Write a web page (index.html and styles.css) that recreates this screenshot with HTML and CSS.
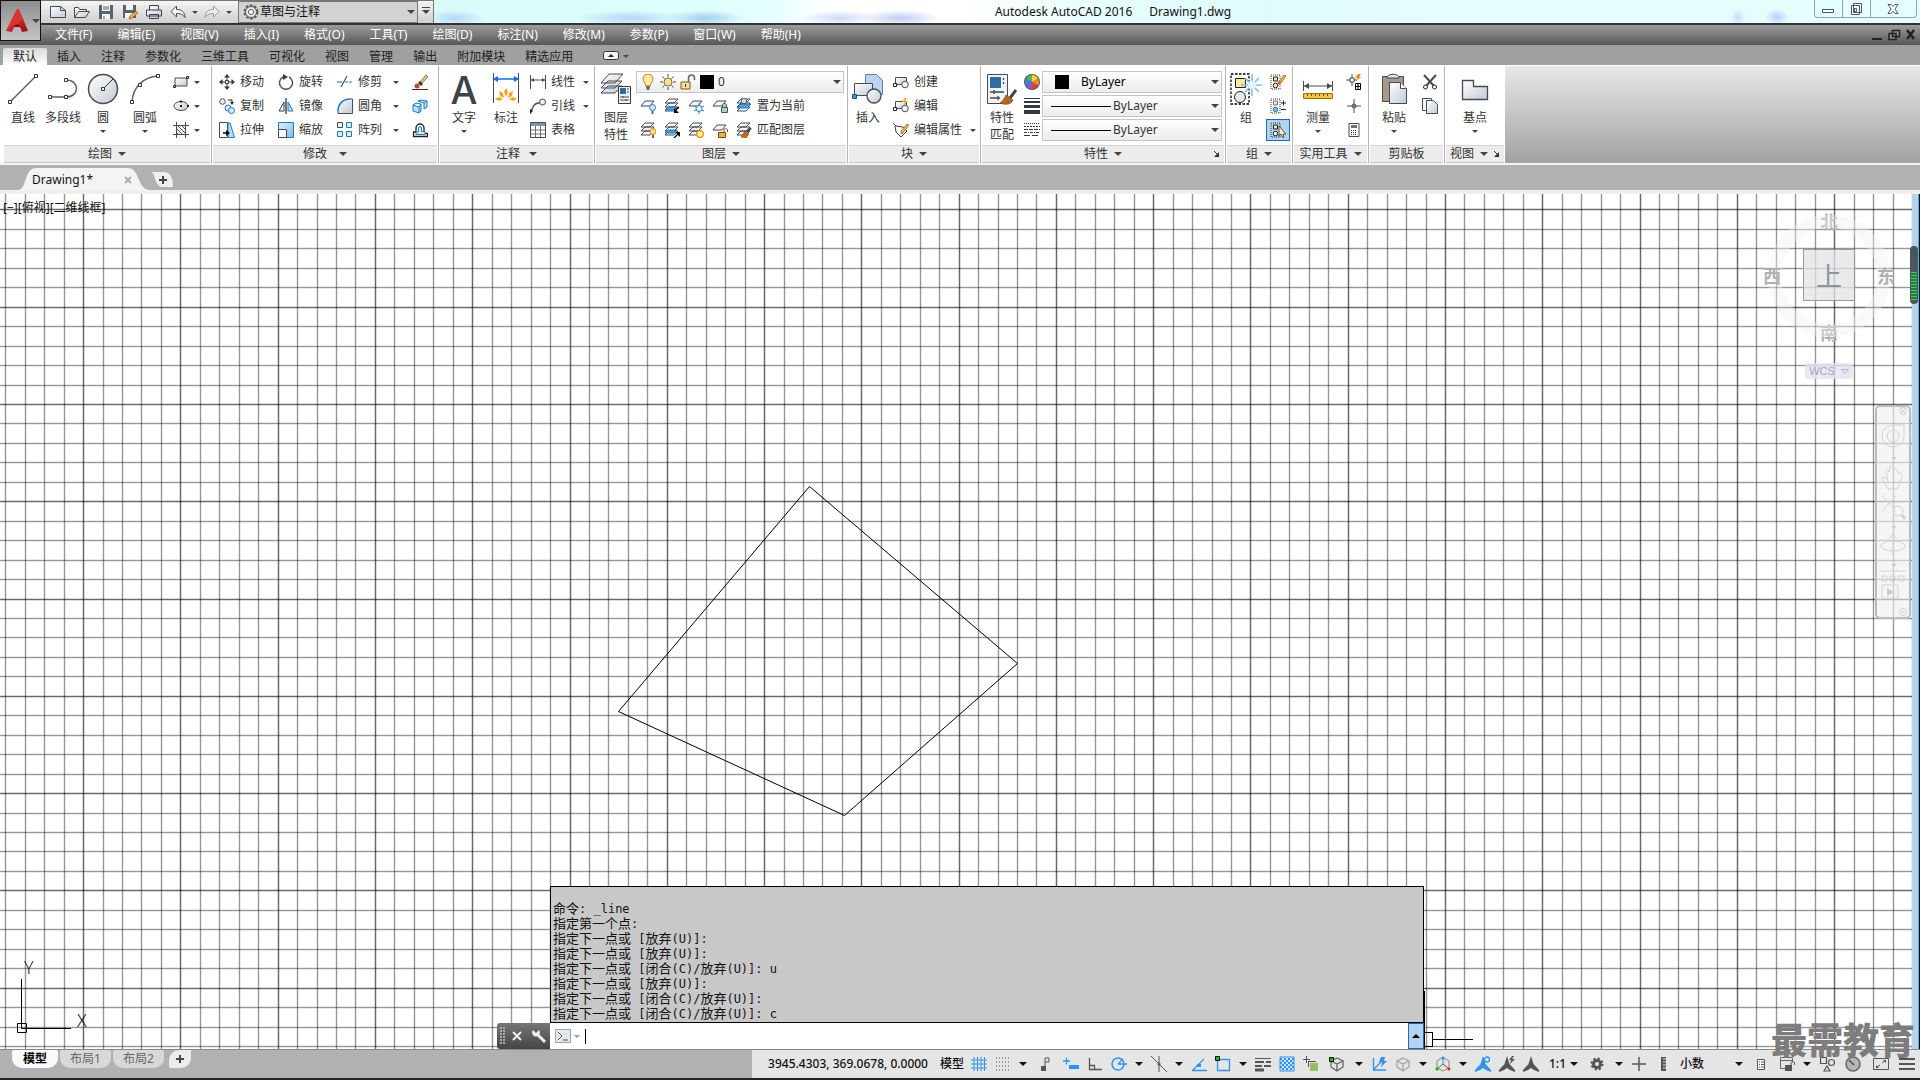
FILE: index.html
```html
<!DOCTYPE html>
<html lang="zh-CN">
<head>
    <meta charset="UTF-8">
    <meta name="viewport" content="width=device-width, initial-scale=1.0">
    <title>Autodesk AutoCAD 2016 - Drawing1.dwg</title>
    <link rel="stylesheet" href="styles.css">
</head>
<body>
    <!-- Icon sprite -->
    <svg class="sprite" aria-hidden="true">
        <defs>
            <linearGradient id="metal" x1="0" y1="0" x2="1" y2="1">
                <stop offset="0" stop-color="#ffffff"/><stop offset="1" stop-color="#c3cad3"/>
            </linearGradient>
            <linearGradient id="red" x1="0" y1="0" x2="1" y2="1">
                <stop offset="0" stop-color="#f0564c"/><stop offset="1" stop-color="#9c0c10"/>
            </linearGradient>
            <linearGradient id="sky" x1="0" y1="0" x2="1" y2="1">
                <stop offset="0" stop-color="#e2f1fb"/><stop offset="1" stop-color="#7fbbe0"/>
            </linearGradient>
        </defs>

        <!-- quick access -->
        <symbol id="i-logo" viewBox="0 0 24 26">
            <path d="M12 1 1 23l6 1 2-5h6l2 5 6-1L14 1z" fill="url(#red)"/>
            <path d="M12 1 1 23l8-4 9-8z" fill="#d9342e"/>
            <path d="m1 23 8-4h6l8 4-11-7z" fill="#8d0a0f"/>
        </symbol>
        <symbol id="i-new" viewBox="0 0 16 16"><path d="M.5 2.500h10l5 4v7H.5zM10.500 2.500v4h5" fill="url(#metal)" stroke="#444b54"/></symbol>
        <symbol id="i-open" viewBox="0 0 16 16"><path d="M.5 13.500v-10h4l1 2h7v2.500M.5 13.500l4-6h11l-4 6z" fill="url(#metal)" stroke="#444b54"/></symbol>
        <symbol id="i-save" viewBox="0 0 16 16"><path d="M1 1h14v14H1z" fill="#59616c"/><path d="M4 1h8v6H4zM4 10h8v5H4z" fill="#f4f5f6"/><path d="M5 3h6M5 5h6M6 12v3" stroke="#59616c"/></symbol>
        <symbol id="i-saveas" viewBox="0 0 16 16"><path d="M1 1h13v13H1z" fill="#59616c"/><path d="M4 1h7v5H4zM3 9h8v5H3z" fill="#f4f5f6"/><path d="m7 15 1-3 6-5 2 2-6 5z" fill="#f3b23c" stroke="#7b4b12" stroke-width=".6"/></symbol>
        <symbol id="i-print" viewBox="0 0 16 16"><path d="M3.500 6V1.500h9V6M.5 6h15v6H.5zM3.500 10.500h9v4h-9z" fill="url(#metal)" stroke="#3d434b"/></symbol>
        <symbol id="i-undo" viewBox="0 0 16 16"><path d="M6.500 2v3.500c5 0 8 2 8.500 8-2-3-4-4-8.500-4V13L1 7.500z" fill="#f4f6f8" stroke="#444b54"/></symbol>
        <symbol id="i-redo" viewBox="0 0 16 16"><path d="M9.500 2v3.500c-5 0-8 2-8.500 8 2-3 4-4 8.500-4V13L15 7.500z" fill="#eee" stroke="#999"/></symbol>
        <symbol id="i-gear" viewBox="0 0 16 16"><circle cx="8" cy="8" r="6.500" fill="none" stroke="#555" stroke-width="2" stroke-dasharray="2.600 1.500"/><circle cx="8" cy="8" r="5.500" fill="#e6e8ea" stroke="#555"/><circle cx="8" cy="8" r="2.500" fill="#fff" stroke="#555"/></symbol>

        <!-- draw -->
        <symbol id="b-line" viewBox="0 0 32 32"><path d="M3 29 29 3" stroke="#5a6068" stroke-width="1.500"/><path d="M1.500 27.500h3v3h-3zM27.500 1.500h3v3h-3z" fill="#fff" stroke="#333"/></symbol>
        <symbol id="b-pline" viewBox="0 0 32 32"><path d="M3 24h16c14 0 14-17 0-17" fill="none" stroke="#5a6068" stroke-width="1.500"/><path d="M1.500 22.500h3v3h-3zM17.500 22.500h3v3h-3zM17.500 5.500h3v3h-3z" fill="#fff" stroke="#333"/></symbol>
        <symbol id="b-circle" viewBox="0 0 32 32"><circle cx="16" cy="16" r="14.500" fill="url(#metal)" stroke="#444b54" stroke-width="1.500"/><path d="M16 16 26 6" stroke="#333"/><path d="M14.500 14.500h3v3h-3z" fill="#fff" stroke="#333"/></symbol>
        <symbol id="b-arc" viewBox="0 0 32 32"><path d="M3 29C4 14 14 4 29 3" fill="none" stroke="#5a6068" stroke-width="1.500"/><path d="M1.500 27.500h3v3h-3zM27.500 1.500h3v3h-3zM9.500 10.500h3v3h-3z" fill="#fff" stroke="#333"/></symbol>
        <symbol id="s-rect" viewBox="0 0 16 16"><path d="M2 4h12v8H2z" fill="url(#metal)" stroke="#444b54"/><path d="M.5 11.500h2v2h-2zM13.500 2.500h2v2h-2z" fill="#fff" stroke="#222"/></symbol>
        <symbol id="s-ellipse" viewBox="0 0 16 16"><ellipse cx="8" cy="8" rx="7" ry="4.500" fill="url(#metal)" stroke="#444b54"/><path d="M7 7h2v2H7zM7 2.500h2v2H7zM14 7h2v2h-2z" fill="#222"/></symbol>
        <symbol id="s-hatch" viewBox="0 0 16 16"><path d="M3 3h10v10H3z" fill="#f0f1f2"/><path d="m3 10 3 3M3 6l7 7M4 3l9 9M8 3l5 5" stroke="#555"/><path d="M0 3.500h16M0 12.500h16M3.500 0v16M12.500 0v16" stroke="#444b54"/></symbol>

        <!-- modify -->
        <symbol id="s-move" viewBox="0 0 16 16"><path d="M8 0l3 3.500H5zM8 16l3-3.500H5zM0 8l3.500-3v6zM16 8l-3.500-3v6z" fill="#333a42"/><path d="M6.500 6.500h3v3h-3z" fill="#fff" stroke="#333"/><path d="M8 3v3M8 10v3M3 8h3M10 8h3" stroke="#333"/></symbol>
        <symbol id="s-rotate" viewBox="0 0 16 16"><path d="M5 3a6.500 6.500 0 1 0 6 0" fill="none" stroke="#4c545e" stroke-width="1.500"/><path d="m5 0 5 3-5 3z" fill="#333a42"/></symbol>
        <symbol id="s-trim" viewBox="0 0 16 16"><path d="M0 8h5M4 13l6-11" stroke="#4c545e" stroke-width="1.200"/><path d="M8 8h8" stroke="#1b7ac4" stroke-width="1.200" stroke-dasharray="3 1"/></symbol>
        <symbol id="s-erase" viewBox="0 0 16 16"><path d="m8 8 6-7 2 2-7 7z" fill="#e6c98c" stroke="#6a4b1c" stroke-width=".7"/><path d="m6 9 2-2 3 3-2 2z" fill="#333"/><circle cx="5" cy="12" r="2.500" fill="#d2451d"/><path d="M0 15.500h16" stroke="#333"/></symbol>
        <symbol id="s-copy" viewBox="0 0 16 16"><circle cx="3.500" cy="3.500" r="2.800" fill="#f0f1f3" stroke="#444b54"/><circle cx="9" cy="10" r="3" fill="#d7ebf8" stroke="#1b7ac4"/><circle cx="12.500" cy="12.500" r="3" fill="#d7ebf8" stroke="#1b7ac4"/><path d="M9 2h4v2" fill="none" stroke="#222"/><path d="m11 4 4 0-2 3z" fill="#222"/></symbol>
        <symbol id="s-mirror" viewBox="0 0 16 16"><path d="M6 4v9H1z" fill="#fff" stroke="#333a42"/><path d="M10 4v9h5z" fill="#b9dcf2" stroke="#1b7ac4"/><path d="M8 0v16" stroke="#222" stroke-width="1.200"/></symbol>
        <symbol id="s-fillet" viewBox="0 0 16 16"><path d="M1 15C1 7 7 1 15 1v14z" fill="url(#metal)"/><path d="M1 13C1 6 6 1 13 1" fill="none" stroke="#1b7ac4" stroke-width="1.500"/><path d="M13 1h2.500v14.500H1V13" fill="none" stroke="#444b54"/></symbol>
        <symbol id="s-explode" viewBox="0 0 16 16"><path d="m1 7 3-2 5 1v7l-2 2-6-2zM1 7l6 2 2-3M7 9v6" fill="#bfe0f4" stroke="#1b7ac4"/><path d="m6 3 3-1 6 1v6l-3 2V5zM15 3l-3 2" fill="#bfe0f4" stroke="#1b7ac4"/></symbol>
        <symbol id="s-stretch" viewBox="0 0 16 16"><path d="M.5.5h8v15h-8z" fill="#fff" stroke="#444b54"/><path d="M9 1h2l4.500 14.500H9z" fill="#b9dcf2" stroke="#1b7ac4"/><path d="M4 11h4" stroke="#000" stroke-width="1.500"/><path d="m7 8 4 3-4 3z"/></symbol>
        <symbol id="s-scale" viewBox="0 0 16 16"><path d="M.5.5h15v15H.5z" fill="url(#sky)" stroke="#1b7ac4"/><path d="M.5 7.500h8v8h-8z" fill="#fff" stroke="#444b54"/></symbol>
        <symbol id="s-array" viewBox="0 0 16 16"><path d="M.5.5h5v5h-5z" fill="#eef0f2" stroke="#444b54"/><path d="M9.500.5h5v5h-5zM.5 9.500h5v5h-5zM9.500 9.500h5v5h-5z" fill="#d7ebf8" stroke="#1b7ac4"/></symbol>
        <symbol id="s-offset" viewBox="0 0 16 16"><path d="M1.500 14.500h14v-3h-3.500V6a4 4 0 0 0-8 0v4H1.500z" fill="none" stroke="#222" stroke-width="1.300"/><path d="M4 12.500h9V9.500H9.500V6a1.500 1.500 0 0 0-3 0v4H4z" fill="#d7ebf8" stroke="#1b7ac4"/></symbol>

        <!-- annotation -->
        <symbol id="b-dim" viewBox="0 0 32 32"><path d="M3.500 0v30M28.500 0v30" stroke="#444b54"/><path d="M4 6h24" stroke="#0a6cff" stroke-width="1.500"/><path d="m3 6 5-3v6zM29 6l-5-3v6z" fill="#0a6cff"/><path d="m16 15 2 4-2 5-2-5zM9 18l4 2 1 5-4-2zM23 18l-4 2-1 5 4-2zM5 26l4-2 4 2-4 2zM27 26l-4-2-4 2 4 2z" fill="#f3a41f"/></symbol>
        <symbol id="s-linear" viewBox="0 0 16 16"><path d="M.5 1v14M15.500 1v14M1 6h14" stroke="#444b54"/><path d="m1 6 3-2v4zM15 6l-3-2v4z" fill="#444b54"/></symbol>
        <symbol id="s-leader" viewBox="0 0 16 16"><path d="M1 14C3 8 4 6 8 5h2" fill="none" stroke="#444b54" stroke-width="1.300"/><path d="m0 16 0-5 3 2z" fill="#222"/><circle cx="12.500" cy="4" r="3" fill="#eef0f2" stroke="#444b54"/></symbol>
        <symbol id="s-table" viewBox="0 0 16 16"><path d="M.5.500h15v15H.5z" fill="#fff" stroke="#444b54"/><path d="M1 1h14v3H1z" fill="#8493a5"/><path d="M1 8h14M1 12h14M5.500 4v11M10.500 4v11" stroke="#69727d"/></symbol>

        <!-- layers -->
        <symbol id="b-layers" viewBox="0 0 32 32"><path d="m1 20 7-7h14l-7 7zM1 15l7-7h14l-7 7zM1 10l8-9h14l-8 9z" fill="url(#metal)" stroke="#444b54"/><path d="M18.500 13.500h12v17h-12z" fill="#f0f3f6" stroke="#333a42"/><path d="M20 15h6v6h-6z" fill="#2e6da3"/><path d="M27 16h2M27 19h2M20 24h9M20 27h9M23 23v2M26 26v2" stroke="#444b54"/></symbol>
        <symbol id="s-bulb" viewBox="0 0 16 16"><path d="M8 0a5 5 0 0 0-3 9l1 3h4l1-3a5 5 0 0 0-3-9z" fill="#fde9a0" stroke="#b08a2a"/><path d="M6 13h4M6.500 15h3" stroke="#444b54" stroke-width="1.500"/></symbol>
        <symbol id="s-sun" viewBox="0 0 16 16"><circle cx="8" cy="8" r="4" fill="#fbe296" stroke="#8a6f30"/><path d="M8 0v3M8 13v3M0 8h3M13 8h3M2.500 2.500l2 2M11.500 11.500l2 2M2.500 13.500l2-2M11.500 4.500l2-2" stroke="#444b54"/></symbol>
        <symbol id="s-unlock" viewBox="0 0 16 16"><path d="M1 8h9v7H1z" fill="#f8e29a" stroke="#7b5d12"/><path d="M8.500 8V4c0-4 6-4 6 0v2" fill="none" stroke="#5d6672" stroke-width="1.500"/><path d="M5.500 10v3" stroke="#333"/></symbol>
        <symbol id="s-lay1" viewBox="0 0 16 16"><path d="m1 8 4-5h9l-4 5z" fill="#f4f5f7" stroke="#444b54"/></symbol>
        <symbol id="s-lay3" viewBox="0 0 16 16"><path d="m1 13 4-4h9l-4 4zM1 9l4-4h9l-4 4zM1 5l4-4h9l-4 4z" fill="#f4f5f7" stroke="#444b54"/></symbol>
        <symbol id="s-layoff" viewBox="0 0 16 16"><use href="#s-lay1"/><circle cx="12.500" cy="9.500" r="3" fill="#cfe6fa" stroke="#2f7cc8"/><path d="M11.500 13h2v3h-2z" fill="#5d6672"/></symbol>
        <symbol id="s-layiso" viewBox="0 0 16 16"><use href="#s-lay3"/><path d="m1 12 3-3h9l-3 3z" fill="#3fa3e6" stroke="#1b7ac4"/><path d="m15 9-4 4" stroke="#000" stroke-width="1.300"/><path d="M10 10v5h5z"/></symbol>
        <symbol id="s-layfrz" viewBox="0 0 16 16"><use href="#s-lay1"/><path d="M11 5v11M6 8l10 5M16 8l-10 5" stroke="#2f7cc8"/><circle cx="11" cy="10.500" r="3" fill="#e8f4fd" stroke="#2f7cc8"/></symbol>
        <symbol id="s-laylock" viewBox="0 0 16 16"><use href="#s-lay1"/><path d="M9.500 9.500h6v5h-6zM10.500 9V7c0-2 4-2 4 0v2" fill="#b5cfc0" stroke="#3f5c4d"/></symbol>
        <symbol id="s-laycur" viewBox="0 0 16 16"><use href="#s-lay3"/><path d="m1 10 4-4h10l-4 4z" fill="#3fa3e6" stroke="#1b7ac4"/><circle cx="8" cy="3" r="2.800" fill="#d8dce0" stroke="#555"/></symbol>
        <symbol id="s-layon" viewBox="0 0 16 16"><use href="#s-lay3"/><circle cx="13" cy="9.500" r="3" fill="#fde27a" stroke="#e08a12"/><path d="M12 13h2v3h-2z" fill="#5d6672"/></symbol>
        <symbol id="s-layuniso" viewBox="0 0 16 16"><use href="#s-lay3"/><path d="m1 11 3-3h9l-3 3z" fill="#3fa3e6" stroke="#1b7ac4"/><path d="m10 16 5-5" stroke="#000" stroke-width="1.300"/><path d="M11 10h5v5z"/></symbol>
        <symbol id="s-laythaw" viewBox="0 0 16 16"><use href="#s-lay3"/><circle cx="12" cy="12" r="3.300" fill="#fff09a" stroke="#f08b10" stroke-width="1.300"/></symbol>
        <symbol id="s-layunlk" viewBox="0 0 16 16"><use href="#s-lay1"/><path d="M6.500 10.500h7v5h-7z" fill="#f3b23c" stroke="#7b4b12"/><path d="M12 10V8c0-2 3.500-2 3.500 0v2" fill="none" stroke="#7b4b12"/></symbol>
        <symbol id="s-laymatch" viewBox="0 0 16 16"><use href="#s-lay3"/><path d="m15 6-4 4" stroke="#444" stroke-width="2"/><path d="m9 9 4 3-3 4-5-1z" fill="#c06a1c" stroke="#7b4b12" stroke-width=".6"/></symbol>

        <!-- block -->
        <symbol id="b-insert" viewBox="0 0 32 32"><path d="M13.500 1.500h11l6 6v14h-17z" fill="#bcd3ee" stroke="#5e7fa8"/><path d="M2.500 10.500h18v12h-18z" fill="url(#metal)" stroke="#444b54"/><circle cx="22" cy="23" r="7" fill="url(#metal)" stroke="#444b54" stroke-width="1.300"/><path d="M.5 21.500h4v4h-4z" fill="#4a90e2" stroke="#1d4f8c"/></symbol>
        <symbol id="s-create" viewBox="0 0 16 16"><path d="M2.500 3.500h11v7h-11z" fill="url(#metal)" stroke="#444b54"/><circle cx="12" cy="10.500" r="3.300" fill="#eef0f2" stroke="#444b54"/><path d="M.5 9.500h3v3h-3z" fill="#fff" stroke="#222"/></symbol>
        <symbol id="s-bedit" viewBox="0 0 16 16"><use href="#s-create"/><path d="m12 0-3 4h3l-2 4 5-5h-3l2-3z" fill="#f9a21c"/></symbol>
        <symbol id="s-attedit" viewBox="0 0 16 16"><path d="m0 1 3 3 7 1 4 4-6 6-5-5-1-6" fill="#fff" stroke="#333a42"/><path d="m8 9 6-7 2 1-6 8-2 1z" fill="#f3b23c" stroke="#7b4b12" stroke-width=".6"/></symbol>

        <!-- properties -->
        <symbol id="b-match" viewBox="0 0 32 32"><path d="M1.500 1.500h20v29h-20z" fill="#f0f3f6" stroke="#444b54"/><path d="M4 4h11v11H4z" fill="#2e6da3"/><path d="M17.500 5v2M17.500 9v2M4 19h14M4 25h10M8 17v4M12 23v4" stroke="#444b54" stroke-width="1.300"/><path d="m30 17-6 8" stroke="#444" stroke-width="3"/><path d="m20 22 7 5c-2 5-8 5-13 3 3-2 4-4 6-8z" fill="#b9651b" stroke="#7b4b12" stroke-width=".7"/></symbol>
        <symbol id="s-wheel" viewBox="0 0 16 16"><circle cx="8" cy="8" r="8" fill="#555"/><path d="M8 8V1a7 7 0 0 1 6 3.500z" fill="#f6d33c"/><path d="M8 8l6-3.500a7 7 0 0 1 0 7z" fill="#f08b2a"/><path d="m8 8 6 3.500A7 7 0 0 1 8 15z" fill="#e63c3c"/><path d="M8 8v7a7 7 0 0 1-6-3.500z" fill="#8b56d6"/><path d="m8 8-6 3.500a7 7 0 0 1 0-7z" fill="#3b83e0"/><path d="M8 8 2 4.500A7 7 0 0 1 8 1z" fill="#4cbb4c"/></symbol>
        <symbol id="s-lwt" viewBox="0 0 16 16"><path d="M0 .5h16" stroke="#333a42"/><path d="M0 4h16" stroke="#333a42" stroke-width="2"/><path d="M0 8.500h16" stroke="#333a42" stroke-width="3"/><path d="M0 14h16" stroke="#333a42" stroke-width="4"/></symbol>
        <symbol id="s-ltype" viewBox="0 0 16 16"><g stroke="#333a42"><path d="M0 1.500h16" stroke-dasharray="1 1"/><path d="M0 4.500h16" stroke-dasharray="2 1"/><path d="M0 7.500h16" stroke-dasharray="4 1"/><path d="M0 10.500h16" stroke-dasharray="3 1 1 1"/><path d="M0 13.500h16" stroke-dasharray="6 2"/></g></symbol>

        <!-- group -->
        <symbol id="b-group" viewBox="0 0 32 32"><path d="M1 1h18v30H1z" fill="none" stroke="#000" stroke-width="1.300" stroke-dasharray="2.500 1.500"/><path d="M5.500 5.500h10v9h-10z" fill="#f3ea9c" stroke="#222"/><circle cx="10" cy="24" r="5.500" fill="#e4ecef" stroke="#222"/><path d="M22 1v22M11 12h21M15 5l14 14M29 5 15 19" stroke="#7fbcea" stroke-width="1.500"/><circle cx="22" cy="12" r="4" fill="#e4f4ff"/></symbol>
        <symbol id="s-grp" viewBox="0 0 16 16"><path d="M1 1h9v14H1z" fill="none" stroke="#333" stroke-dasharray="1 1"/><path d="M3.500 3h4v4h-4z" fill="#f3ea9c" stroke="#222"/><circle cx="5.500" cy="11.500" r="2.300" fill="#e4ecef" stroke="#222"/></symbol>
        <symbol id="s-ungroup" viewBox="0 0 16 16"><use href="#s-grp"/><path d="m9 8 5-7 2 1-5 7z" fill="#f3b23c" stroke="#7b4b12" stroke-width=".6"/><path d="m7 9 2-2 2 2-2 2z" fill="#e05a4a"/></symbol>
        <symbol id="s-grpedit" viewBox="0 0 16 16"><path d="M1 1h9v14H1z" fill="none" stroke="#333" stroke-dasharray="1 1"/><path d="M3.500 3h4v4h-4z" fill="#e8e8e8" stroke="#777"/><circle cx="5.500" cy="11.500" r="2.300" fill="#7fbcea" stroke="#1b7ac4"/><path d="M11 5h5M13.500 2.500v5M11 11.500h5" stroke="#222"/></symbol>
        <symbol id="s-grpsel" viewBox="0 0 16 16"><use href="#s-grp"/><path d="M9 4v10l2-2 2 4 1-1-1-3h3z" fill="#f7eeb0" stroke="#333" stroke-width=".8"/></symbol>

        <!-- utilities, clipboard, view -->
        <symbol id="b-measure" viewBox="0 0 32 32"><path d="M1.500 8v10M30.500 8v10M2 13h28" stroke="#444b54"/><path d="m2 13 5-3v6zM30 13l-5-3v6z" fill="#444b54"/><path d="M1.500 20.500h29v5h-29z" fill="#f4c631" stroke="#9a7412"/><path d="M5.500 21v2M9.500 21v2M13.500 21v2M17.500 21v2M21.500 21v2M25.500 21v2" stroke="#6d500a"/></symbol>
        <symbol id="s-qsel" viewBox="0 0 16 16"><path d="M0 6h11M6 0v12" stroke="#444b54"/><path d="M4 4h4v4H4z" fill="#fff" stroke="#444b54"/><path d="M12 0 9 4h3l-2 3 5-4h-2l2-3z" fill="#f9821c"/><path d="M9.500 9.500h5v6h-5zM9 12.500h6M12 9v7" fill="#fff" stroke="#000"/></symbol>
        <symbol id="s-point" viewBox="0 0 16 16"><path d="M1 8h14M8 1v14" stroke="#444b54"/><circle cx="8" cy="8" r="2" fill="none" stroke="#444b54"/></symbol>
        <symbol id="s-calc" viewBox="0 0 16 16"><path d="M3 1.500h10v13H3z" fill="#fff" stroke="#444b54"/><path d="M5 3h6v3H5z" fill="#69727d"/><path d="M5 8.500h6M5 10.500h6M5 12.500h6" stroke="#333" stroke-dasharray="1 1"/></symbol>
        <symbol id="b-paste" viewBox="0 0 32 32"><path d="M4.500 3.500h21v25h-21z" fill="#a89a8b" stroke="#51473d"/><path d="M9 5c0-5 12-5 12 0z" fill="#e8eaec" stroke="#444b54"/><path d="M11.500 9.500h11l6 6v15h-17z" fill="url(#metal)" stroke="#444b54"/><path d="M22.500 9.500v6h6" fill="#fff" stroke="#444b54"/></symbol>
        <symbol id="s-cut" viewBox="0 0 16 16"><path d="m2 1 10 11M14 1 4 12" stroke="#444b54" stroke-width="2"/><circle cx="3.500" cy="13" r="2" fill="#fff" stroke="#222"/><circle cx="12.500" cy="13" r="2" fill="#fff" stroke="#222"/></symbol>
        <symbol id="s-copyclip" viewBox="0 0 16 16"><path d="M.5.5h9v12h-9z" fill="#fff" stroke="#444b54"/><path d="M4.500 2.500h7l4 4v9h-11z" fill="url(#metal)" stroke="#444b54"/></symbol>
        <symbol id="b-base" viewBox="0 0 32 32"><path d="M3.500 7.500h11v6h14v13h-25z" fill="url(#metal)" stroke="#444b54" stroke-width="1.300"/></symbol>
        <symbol id="s-launch" viewBox="0 0 8 8"><path d="m1 1 4 4" stroke="#333"/><path d="M6 2v5H1z" fill="#333"/></symbol>

        <!-- status bar -->
        <symbol id="t-grid" viewBox="0 0 16 16"><path d="M0 4h16M0 8h16M0 12h16M3 1v14M6.500 1v14M10 1v14M13.500 1v14" stroke="#2c93f5"/></symbol>
        <symbol id="t-snap" viewBox="0 0 16 16"><path d="M1 2h14M1 6h14M1 10h14M1 14h14" stroke="#555" stroke-dasharray="1 2"/></symbol>
        <symbol id="t-infer" viewBox="0 0 16 16"><path d="M8 13V2h4v4H8" fill="none" stroke="#555"/><path d="M4 10h5v5H4z" fill="#555"/></symbol>
        <symbol id="t-dyn" viewBox="0 0 16 16"><path d="M0 5h7M3.500 1.500v7" stroke="#2c93f5" stroke-width="1.300"/><path d="M6 9h10v4H6z" fill="#2c93f5"/></symbol>
        <symbol id="t-ortho" viewBox="0 0 16 16"><path d="M2.500 2v11.500H15M2.500 9.500h5v4" fill="none" stroke="#555" stroke-width="1.300"/></symbol>
        <symbol id="t-polar" viewBox="0 0 16 16"><circle cx="7" cy="8" r="6" fill="none" stroke="#2c93f5" stroke-width="1.500"/><path d="M7 8h9M7 8l5-5" stroke="#2c93f5" stroke-width="1.300"/></symbol>
        <symbol id="t-iso" viewBox="0 0 16 16"><path d="m0 0 16 16M8 0v16" stroke="#555"/><circle cx="8" cy="8" r="1.500" fill="#555"/></symbol>
        <symbol id="t-track" viewBox="0 0 16 16"><path d="m2 14 11-11M1 14.500h15" stroke="#2c93f5" stroke-width="1.300"/><path d="M6 8h4v3H6z" fill="#2c93f5"/></symbol>
        <symbol id="t-osnap" viewBox="0 0 16 16"><path d="M2.500 3.500h12v11h-12z" fill="none" stroke="#2c93f5" stroke-width="1.300"/><path d="M.5.500h4v4h-4z" fill="#0c0" stroke="#000"/></symbol>
        <symbol id="t-lwt" viewBox="0 0 16 16"><path d="M0 2.500h16" stroke="#555"/><path d="M0 6h9M11 6h5" stroke="#555" stroke-width="2"/><path d="M0 10h7M9 10h7" stroke="#555" stroke-width="2"/><path d="M0 14h9" stroke="#555" stroke-width="3"/></symbol>
        <symbol id="t-trans" viewBox="0 0 16 16"><path d="M1 1h14v14H1z" fill="#cfe6fd" stroke="#2c93f5"/><path d="M1 3h14M1 7h14M1 11h14" stroke="#2c93f5" stroke-width="2" stroke-dasharray="2 2"/><path d="M3 5h12M3 9h12M3 13h12" stroke="#2c93f5" stroke-width="2" stroke-dasharray="2 2"/></symbol>
        <symbol id="t-cycle" viewBox="0 0 16 16"><path d="M0 3.500h7M3.500 0v7M5 5.500h8M5.500 5v6" stroke="#555"/><path d="M7 7h8v8H7z" fill="#8fbf6a"/></symbol>
        <symbol id="t-box" viewBox="0 0 16 16"><path d="m8 2 6 3v6l-6 4-6-4V5zM2 5l6 3 6-3M8 8v7" fill="none" stroke="#666" stroke-width="1.300"/></symbol>
        <symbol id="t-osnap3" viewBox="0 0 16 16"><use href="#t-box"/><path d="M.5 1.500h4v4h-4z" fill="#0c0" stroke="#000"/></symbol>
        <symbol id="t-ducs" viewBox="0 0 16 16"><path d="M2.500 2v12H15M3 13l8-8" fill="none" stroke="#2c93f5" stroke-width="1.300"/><path d="M10 1 8 6h3l-1 5 6-6h-3l1-4z" fill="#2c93f5"/></symbol>
        <symbol id="t-gizmo" viewBox="0 0 16 16"><path d="m8 1 6 4v7l-6 3-6-3V5z" fill="none" stroke="#888"/><path d="M8 8V1" stroke="#2c93f5"/><path d="m8 8-6 5" stroke="#1a1"/><path d="m8 8 6 5" stroke="#d22"/><circle cx="8" cy="2" r="1.500" fill="#2c93f5"/><circle cx="2" cy="13" r="1.500" fill="#1a1"/><circle cx="14" cy="13" r="1.500" fill="#d22"/></symbol>
        <symbol id="t-ann" viewBox="0 0 16 16"><path d="M8 0 5.500 8 0 14v2l5-2 3-2 3 2 5 2v-2l-5.500-6z"/></symbol>
        <symbol id="t-annvis" viewBox="0 0 16 16"><use href="#t-ann" fill="#2c93f5"/><circle cx="12" cy="3.500" r="2.500" fill="#e5e5e5" stroke="#2c93f5" stroke-width="1.300"/></symbol>
        <symbol id="t-annauto" viewBox="0 0 16 16"><use href="#t-ann" fill="#555"/><path d="m13 0-3 4h2l-1 4 5-5h-3l2-3z" fill="#555"/></symbol>
        <symbol id="t-annsc" viewBox="0 0 16 16"><use href="#t-ann" fill="#555"/></symbol>
        <symbol id="t-gear" viewBox="0 0 16 16"><circle cx="8" cy="8" r="5" fill="#555"/><circle cx="8" cy="8" r="5.500" fill="none" stroke="#555" stroke-width="2" stroke-dasharray="2.300 2"/><circle cx="8" cy="8" r="2" fill="#e5e5e5"/></symbol>
        <symbol id="t-plus" viewBox="0 0 16 16"><path d="M1 8h14M8 1v14" stroke="#555" stroke-width="1.500"/></symbol>
        <symbol id="t-ruler" viewBox="0 0 16 16"><path d="M6 1h5v14H6z" fill="#555"/><path d="M8 3h3M8 6h3M8 9h3M8 12h3" stroke="#ddd"/></symbol>
        <symbol id="t-qp" viewBox="0 0 16 16"><path d="M4.500 3.500h7v10h-7z" fill="#fff" stroke="#555"/><path d="M6 6h1M8 6h3M6 8.500h1M8 8.500h3M6 11h1M8 11h3" stroke="#555"/></symbol>
        <symbol id="t-lock" viewBox="0 0 16 16"><path d="M6 12.500H1.500v-11h12v5M1.500 4.500h12" fill="none" stroke="#666"/><path d="M6 9h7v6H6z" fill="#555"/><path d="M12 9V7c0-2 3.500-2 3.500 0v2" fill="none" stroke="#555"/></symbol>
        <symbol id="t-isolate" viewBox="0 0 16 16"><path d="M1.500 1.500h6v6h-6zM5 15l3-5 3 5z" fill="none" stroke="#555" stroke-width="1.200"/><circle cx="12.500" cy="6.500" r="3" fill="none" stroke="#555" stroke-width="1.200"/></symbol>
        <symbol id="t-hw" viewBox="0 0 16 16"><circle cx="8" cy="8" r="7" fill="#b5b5b5" stroke="#666" stroke-width="1.500"/><path d="m4 4 5 5" stroke="#555" stroke-width="1.500"/></symbol>
        <symbol id="t-clean" viewBox="0 0 16 16"><path d="M.5 2.500h15v11H.5z" fill="none" stroke="#555"/><path d="m9 7 4-3M7 9l-4 3" stroke="#555"/><path d="M10 4h3v3zM3 9v3h3z" fill="#555"/></symbol>
        <symbol id="t-menu" viewBox="0 0 16 16"><path d="M0 3h16M0 8h16M0 13h16" stroke="#555" stroke-width="2"/></symbol>
    </svg>

    <header class="top">
        <div class="titlebar">
            <nav class="quick-access" aria-label="快速访问">
                <button aria-label="新建"><svg><use href="#i-new"/></svg></button>
                <button aria-label="打开"><svg><use href="#i-open"/></svg></button>
                <button aria-label="保存"><svg><use href="#i-save"/></svg></button>
                <button aria-label="另存为"><svg><use href="#i-saveas"/></svg></button>
                <button aria-label="打印"><svg><use href="#i-print"/></svg></button>
                <button aria-label="放弃"><svg><use href="#i-undo"/></svg></button>
                <i class="arr"></i>
                <button aria-label="重做"><svg><use href="#i-redo"/></svg></button>
                <i class="arr"></i>
                <div class="workspace">
                    <svg><use href="#i-gear"/></svg>
                    <select aria-label="工作空间"><option>草图与注释</option></select>
                    <i class="arr arr-lg"></i>
                </div>
                <button class="qa-more" aria-label="自定义"><i class="arr arr-lg"></i></button>
            </nav>
            <h1 class="window-title"><span>Autodesk AutoCAD 2016</span><span>Drawing1.dwg</span></h1>
            <div class="window-buttons">
                <button aria-label="最小化"><svg viewBox="0 0 14 14"><path d="M1.500 7.500h11v3h-11z" fill="#fff" stroke="#4c5564"/></svg></button>
                <button aria-label="还原"><svg viewBox="0 0 14 14"><path d="M4.500 1.500h8v9h-8zM2.500 3.500h8v9h-8zM5.500 6.500h2v3h-2z" fill="#fff" stroke="#4c5564"/></svg></button>
                <button class="win-close" aria-label="关闭"><svg viewBox="0 0 14 14"><path d="M2 2.500h3l2 2 2-2h3L9 7l3 4.500H9l-2-2-2 2H2L5 7z" fill="#fff" stroke="#4c5564"/></svg></button>
            </div>
        </div>
        <button class="app-button" aria-label="应用程序菜单"><svg><use href="#i-logo"/></svg><i class="arr arr-lg"></i></button>

        <nav class="menubar">
            <a href="#">文件(F)</a><a href="#">编辑(E)</a><a href="#">视图(V)</a><a href="#">插入(I)</a><a href="#">格式(O)</a><a href="#">工具(T)</a><a href="#">绘图(D)</a><a href="#">标注(N)</a><a href="#">修改(M)</a><a href="#">参数(P)</a><a href="#">窗口(W)</a><a href="#">帮助(H)</a>
            <svg class="mdi" viewBox="0 0 44 12"><path d="M0 9h10v2H0z" fill="#222"/><path d="M20.500 1.500h7v6h-7zM17 4.500h7v6h-7z" fill="#8a8a8a" stroke="#222" stroke-width="1.500"/><path d="m35 1 7 9M42 1l-7 9" stroke="#222" stroke-width="2.500"/></svg>
        </nav>
    </header>

    <nav class="ribbon-tabs">
        <a href="#" class="active">默认</a><a href="#">插入</a><a href="#">注释</a><a href="#">参数化</a><a href="#">三维工具</a><a href="#">可视化</a><a href="#">视图</a><a href="#">管理</a><a href="#">输出</a><a href="#">附加模块</a><a href="#">精选应用</a>
        <button class="ribbon-min" aria-label="最小化功能区"><svg viewBox="0 0 16 10"><rect x=".5" y=".5" width="15" height="8" rx="2" fill="#f4f4f4" stroke="#333"/><path d="m8 3 3 3H5z" fill="#222"/></svg><i class="arr"></i></button>
    </nav>

    <main class="ribbon">
        <section class="panel p-draw">
            <div class="panel-body">
                <button class="big"><svg><use href="#b-line"/></svg>直线</button>
                <button class="big"><svg><use href="#b-pline"/></svg>多段线</button>
                <button class="big"><svg><use href="#b-circle"/></svg>圆<i class="arr"></i></button>
                <button class="big"><svg><use href="#b-arc"/></svg>圆弧<i class="arr"></i></button>
                <div class="stack">
                    <button class="sm" aria-label="矩形"><svg><use href="#s-rect"/></svg><i class="arr"></i></button>
                    <button class="sm" aria-label="椭圆"><svg><use href="#s-ellipse"/></svg><i class="arr"></i></button>
                    <button class="sm" aria-label="图案填充"><svg><use href="#s-hatch"/></svg><i class="arr"></i></button>
                </div>
            </div>
            <footer>绘图<i class="arr arr-lg"></i></footer>
        </section>

        <section class="panel p-modify">
            <div class="panel-body">
                <div class="stack">
                    <button class="sm"><svg><use href="#s-move"/></svg>移动</button>
                    <button class="sm"><svg><use href="#s-copy"/></svg>复制</button>
                    <button class="sm"><svg><use href="#s-stretch"/></svg>拉伸</button>
                </div>
                <div class="stack">
                    <button class="sm"><svg><use href="#s-rotate"/></svg>旋转</button>
                    <button class="sm"><svg><use href="#s-mirror"/></svg>镜像</button>
                    <button class="sm"><svg><use href="#s-scale"/></svg>缩放</button>
                </div>
                <div class="stack">
                    <button class="sm"><svg><use href="#s-trim"/></svg>修剪<i class="arr"></i></button>
                    <button class="sm"><svg><use href="#s-fillet"/></svg>圆角<i class="arr"></i></button>
                    <button class="sm"><svg><use href="#s-array"/></svg>阵列<i class="arr"></i></button>
                </div>
                <div class="stack">
                    <button class="sm" aria-label="删除"><svg><use href="#s-erase"/></svg></button>
                    <button class="sm" aria-label="分解"><svg><use href="#s-explode"/></svg></button>
                    <button class="sm" aria-label="偏移"><svg><use href="#s-offset"/></svg></button>
                </div>
            </div>
            <footer>修改<i class="arr arr-lg"></i></footer>
        </section>

        <section class="panel p-annotate">
            <div class="panel-body">
                <button class="big"><span class="letter">A</span>文字<i class="arr"></i></button>
                <button class="big"><svg><use href="#b-dim"/></svg>标注</button>
                <div class="stack">
                    <button class="sm"><svg><use href="#s-linear"/></svg>线性<i class="arr"></i></button>
                    <button class="sm"><svg><use href="#s-leader"/></svg>引线<i class="arr"></i></button>
                    <button class="sm"><svg><use href="#s-table"/></svg>表格</button>
                </div>
            </div>
            <footer>注释<i class="arr arr-lg"></i></footer>
        </section>

        <section class="panel p-layers">
            <div class="panel-body">
                <button class="big"><svg><use href="#b-layers"/></svg>图层<br>特性</button>
                <div class="stack">
                    <div class="combo layer-combo">
                        <svg><use href="#s-bulb"/></svg><svg><use href="#s-sun"/></svg><svg><use href="#s-unlock"/></svg><i class="swatch"></i>
                        <select aria-label="图层"><option>0</option></select>
                        <i class="arr arr-lg"></i>
                    </div>
                    <div class="icon-row">
                        <button class="sm" aria-label="关"><svg><use href="#s-layoff"/></svg></button>
                        <button class="sm" aria-label="隔离"><svg><use href="#s-layiso"/></svg></button>
                        <button class="sm" aria-label="冻结"><svg><use href="#s-layfrz"/></svg></button>
                        <button class="sm" aria-label="锁定"><svg><use href="#s-laylock"/></svg></button>
                        <button class="sm"><svg><use href="#s-laycur"/></svg>置为当前</button>
                    </div>
                    <div class="icon-row">
                        <button class="sm" aria-label="打开图层"><svg><use href="#s-layon"/></svg></button>
                        <button class="sm" aria-label="取消隔离"><svg><use href="#s-layuniso"/></svg></button>
                        <button class="sm" aria-label="解冻"><svg><use href="#s-laythaw"/></svg></button>
                        <button class="sm" aria-label="解锁"><svg><use href="#s-layunlk"/></svg></button>
                        <button class="sm"><svg><use href="#s-laymatch"/></svg>匹配图层</button>
                    </div>
                </div>
            </div>
            <footer>图层<i class="arr arr-lg"></i></footer>
        </section>

        <section class="panel p-block">
            <div class="panel-body">
                <button class="big"><svg><use href="#b-insert"/></svg>插入</button>
                <div class="stack">
                    <button class="sm"><svg><use href="#s-create"/></svg>创建</button>
                    <button class="sm"><svg><use href="#s-bedit"/></svg>编辑</button>
                    <button class="sm"><svg><use href="#s-attedit"/></svg>编辑属性<i class="arr"></i></button>
                </div>
            </div>
            <footer>块<i class="arr arr-lg"></i></footer>
        </section>

        <section class="panel p-props">
            <div class="panel-body">
                <button class="big"><svg><use href="#b-match"/></svg>特性<br>匹配</button>
                <div class="stack">
                    <div class="prop"><svg><use href="#s-wheel"/></svg><div class="combo color-combo"><i class="swatch"></i><select aria-label="颜色"><option>ByLayer</option></select><i class="arr arr-lg"></i></div></div>
                    <div class="prop"><svg><use href="#s-lwt"/></svg><div class="combo line-combo"><i class="sample"></i><select aria-label="线宽"><option>ByLayer</option></select><i class="arr arr-lg"></i></div></div>
                    <div class="prop"><svg><use href="#s-ltype"/></svg><div class="combo line-combo"><i class="sample"></i><select aria-label="线型"><option>ByLayer</option></select><i class="arr arr-lg"></i></div></div>
                </div>
            </div>
            <footer>特性<i class="arr arr-lg"></i><svg class="launch"><use href="#s-launch"/></svg></footer>
        </section>

        <section class="panel p-group">
            <div class="panel-body">
                <button class="big"><svg><use href="#b-group"/></svg>组</button>
                <div class="stack">
                    <button class="sm boxed" aria-label="解除编组"><svg><use href="#s-ungroup"/></svg></button>
                    <button class="sm boxed" aria-label="组编辑"><svg><use href="#s-grpedit"/></svg></button>
                    <button class="sm boxed on" aria-label="启用组选择"><svg><use href="#s-grpsel"/></svg></button>
                </div>
            </div>
            <footer>组<i class="arr arr-lg"></i></footer>
        </section>

        <section class="panel p-utils">
            <div class="panel-body">
                <button class="big"><svg><use href="#b-measure"/></svg>测量<i class="arr"></i></button>
                <div class="stack">
                    <button class="sm" aria-label="快速选择"><svg><use href="#s-qsel"/></svg></button>
                    <button class="sm" aria-label="点"><svg><use href="#s-point"/></svg></button>
                    <button class="sm" aria-label="计算器"><svg><use href="#s-calc"/></svg></button>
                </div>
            </div>
            <footer>实用工具<i class="arr arr-lg"></i></footer>
        </section>

        <section class="panel p-clip">
            <div class="panel-body">
                <button class="big"><svg><use href="#b-paste"/></svg>粘贴<i class="arr"></i></button>
                <div class="stack">
                    <button class="sm" aria-label="剪切"><svg><use href="#s-cut"/></svg></button>
                    <button class="sm" aria-label="复制"><svg><use href="#s-copyclip"/></svg></button>
                </div>
            </div>
            <footer>剪贴板</footer>
        </section>

        <section class="panel p-view">
            <div class="panel-body">
                <button class="big"><svg><use href="#b-base"/></svg>基点<i class="arr"></i></button>
            </div>
            <footer>视图<i class="arr arr-lg"></i><svg class="launch"><use href="#s-launch"/></svg></footer>
        </section>
    </main>

    <nav class="file-tabs">
        <button class="file-tab">
            <svg class="tab-shape" viewBox="0 0 132 22"><path d="M0 22C9 22 6 0 18 0h92c12 0 9 22 22 22z" fill="#f4f4f4"/></svg>
            <span>Drawing1*</span>
            <svg class="tab-close" viewBox="0 0 8 8"><path d="m1 1 6 6M7 1 1 7" stroke="#aaa" stroke-width="2"/></svg>
        </button>
        <button class="file-add" aria-label="新图形"><svg viewBox="0 0 24 16"><path d="M1 0h12c8 0 10 6 10 15H12C5 15 5 0 1 0z" fill="#efefef"/><path d="M13 4v8M9 8h8" stroke="#444" stroke-width="2"/></svg></button>
    </nav>

    <div class="viewport">
        <svg class="canvas">
            <g id="grid" shape-rendering="crispEdges"></g>
            <polygon points="809.5,292.5 1017.5,469.5 844.5,621.5 618.5,517.5" fill="none" stroke="#000"/>
            <path d="M1424 797v60M1424 838h8v14h-8M1432 845h41" fill="none" stroke="#000" shape-rendering="crispEdges"/>
        </svg>
        <div class="view-label">[−][俯视][二维线框]</div>

        <svg class="ucs" viewBox="0 0 96 90">
            <path d="M21.500 20v49.500H71M17.500 64.500h9v9h-9z" fill="none" stroke="#000"/>
            <text x="24" y="15">Y</text>
            <text x="77" y="68">X</text>
        </svg>

        <div class="viewcube">
            <span>北</span>
            <div class="cube-row"><span>西</span><button class="cube-face">上</button><span>东</span></div>
            <span>南</span>
            <button class="wcs">WCS <svg viewBox="0 0 8 5"><path d="M.5.500h7l-3.500 4z" fill="none" stroke="#b5b5c4"/></svg></button>
        </div>

        <svg class="navbar" viewBox="0 0 36 214">
            <rect x="1" y="1" width="34" height="212" rx="4" fill="#efefef" fill-opacity=".6" stroke="#bbb" stroke-width="2"/>
            <g fill="none" stroke="#d2d2d2">
                <circle cx="28" cy="6" r="3.500"/><path d="m26 4 4 4M30 4l-4 4"/>
                <path d="M18 20h11v11a11 11 0 1 1-11-11z"/><circle cx="18" cy="31" r="6"/>
                <path d="M13 84 7 74c0-3 3-2 6 2l-2-10c1-2 3-1 3 1l1-5c1-2 3-1 3 0v3c1-2 3-2 4 0l1 4c2-2 4-1 4 1-1 6-2 10-5 14z"/>
                <path d="m7 91 14 15M21 91 7 106"/><circle cx="23" cy="106" r="5"/><path d="m27 110 3 4" stroke-width="3"/>
                <path d="M18 130v20M14 134l4-5 4 5"/><ellipse cx="18" cy="141" rx="12" ry="5"/>
                <path d="M5 166h26M7 171h5v5H7zM15 171h5v5h-5zM23 171h6v5h-6zM7 180h16v13H7z"/>
                <circle cx="28" cy="207" r="3.500"/><path d="M26 207h4"/>
            </g>
            <path d="M16 52h6l-3 3zM16 121h6l-3 3zM16 159h6l-3 3zM12 183l7 4-7 4z" fill="#ccc"/>
        </svg>

        <div class="edge"></div>
        <div class="meter"></div>

        <section class="command">
            <div class="history">
                <p>命令<kbd>: _line</kbd></p>
                <p>指定第一个点<kbd>:</kbd></p>
                <p>指定下一点或<kbd> [</kbd>放弃<kbd>(U)]:</kbd></p>
                <p>指定下一点或<kbd> [</kbd>放弃<kbd>(U)]:</kbd></p>
                <p>指定下一点或<kbd> [</kbd>闭合<kbd>(C)/</kbd>放弃<kbd>(U)]: u</kbd></p>
                <p>指定下一点或<kbd> [</kbd>放弃<kbd>(U)]:</kbd></p>
                <p>指定下一点或<kbd> [</kbd>闭合<kbd>(C)/</kbd>放弃<kbd>(U)]:</kbd></p>
                <p>指定下一点或<kbd> [</kbd>闭合<kbd>(C)/</kbd>放弃<kbd>(U)]: c</kbd></p>
            </div>
            <div class="prompt">
                <div class="grip">
                    <svg viewBox="0 0 52 26"><path d="M4 4v18M7 4v18" stroke="#aaa" stroke-width="2" stroke-dasharray="2 1"/><path d="m16 9 8 8M24 9l-8 8" stroke="#eee" stroke-width="2"/><path d="m40 11 8 8" stroke="#eee" stroke-width="3"/><path d="M36 7l3 3 3-3a4 4 0 0 1-5 6 4 4 0 0 1-1-6z" fill="#eee"/></svg>
                </div>
                <svg class="prompt-icon" viewBox="0 0 16 16"><path d="M.5 1.500h15v13H.5z" fill="#e4e8ec" stroke="#9aa3ad"/><path d="m3 4 4 4-4 4M8 12h5" fill="none" stroke="#555"/></svg>
                <i class="arr"></i>
                <i class="caret"></i>
                <input type="text" aria-label="命令行">
                <button class="history-toggle" aria-label="命令历史"><svg viewBox="0 0 8 4"><path d="m4 0 4 4H0z"/></svg></button>
            </div>
        </section>
        <div class="watermark">最需教育</div>
    </div>

    <footer class="statusbar">
        <nav class="layout-tabs">
            <button class="active">模型</button><button>布局1</button><button>布局2</button>
            <button class="layout-add" aria-label="新建布局"><svg viewBox="0 0 12 12"><path d="M6 2v8M2 6h8" stroke="#444" stroke-width="2"/></svg></button>
        </nav>
        <div class="status-tools">
            <span class="coords">3945.4303, 369.0678, 0.0000</span>
            <button class="text model">模型</button>
            <button aria-label="栅格"><svg><use href="#t-grid"/></svg></button>
            <button aria-label="捕捉"><svg><use href="#t-snap"/></svg></button>
            <i class="drop"></i>
            <button class="wide" aria-label="推断约束"><svg><use href="#t-infer"/></svg></button>
            <button aria-label="动态输入"><svg><use href="#t-dyn"/></svg></button>
            <button aria-label="正交"><svg><use href="#t-ortho"/></svg></button>
            <button aria-label="极轴追踪"><svg><use href="#t-polar"/></svg></button>
            <i class="drop"></i>
            <button aria-label="等轴测草图"><svg><use href="#t-iso"/></svg></button>
            <i class="drop"></i>
            <button aria-label="对象捕捉追踪"><svg><use href="#t-track"/></svg></button>
            <button aria-label="对象捕捉"><svg><use href="#t-osnap"/></svg></button>
            <i class="drop"></i>
            <button aria-label="线宽"><svg><use href="#t-lwt"/></svg></button>
            <button aria-label="透明度"><svg><use href="#t-trans"/></svg></button>
            <button aria-label="选择循环"><svg><use href="#t-cycle"/></svg></button>
            <button class="wide" aria-label="三维对象捕捉"><svg><use href="#t-osnap3"/></svg></button>
            <i class="drop"></i>
            <button aria-label="动态 UCS"><svg><use href="#t-ducs"/></svg></button>
            <button class="dim" aria-label="选择过滤"><svg><use href="#t-box"/></svg></button>
            <i class="drop"></i>
            <button aria-label="小控件"><svg><use href="#t-gizmo"/></svg></button>
            <i class="drop"></i>
            <button aria-label="注释可见性"><svg><use href="#t-annvis"/></svg></button>
            <button aria-label="自动缩放"><svg><use href="#t-annauto"/></svg></button>
            <button aria-label="注释比例"><svg><use href="#t-annsc"/></svg></button>
            <button class="text scale">1:1<i class="drop"></i></button>
            <button class="wide" aria-label="切换工作空间"><svg><use href="#t-gear"/></svg></button>
            <i class="drop"></i>
            <button aria-label="注释监视器"><svg><use href="#t-plus"/></svg></button>
            <button aria-label="单位"><svg><use href="#t-ruler"/></svg></button>
            <button class="text units">小数</button>
            <i class="drop"></i>
            <button class="wide" aria-label="快捷特性"><svg><use href="#t-qp"/></svg></button>
            <button aria-label="锁定用户界面"><svg><use href="#t-lock"/></svg></button>
            <i class="drop"></i>
            <button aria-label="隔离对象"><svg><use href="#t-isolate"/></svg></button>
            <button class="wide" aria-label="硬件加速"><svg><use href="#t-hw"/></svg></button>
            <button class="wide" aria-label="全屏显示"><svg><use href="#t-clean"/></svg></button>
            <button aria-label="自定义"><svg><use href="#t-menu"/></svg></button>
        </div>
    </footer>

    <script src="grid.js"></script>
</body>
</html>
```
FILE: styles.css
```css
*,
*::before {
    margin: 0;
    padding: 0;
    box-sizing: border-box;
}

body {
    display: flex;
    flex-direction: column;
    height: 100vh;
    overflow: hidden;
    background: #b1b1b1;
    color: #333;
    font: 12px/16px "Noto Sans", "Noto Sans CJK SC", sans-serif;
}

button,
select,
input {
    font: inherit;
    color: inherit;
    background: none;
    border: none;
    outline: none;
    appearance: none;
}

a {
    color: inherit;
    text-decoration: none;
}

svg {
    display: block;
    width: 16px;
    height: 16px;
    flex: none;
}

.sprite {
    position: absolute;
    width: 0;
    height: 0;
}

/* drop-down arrows */
.arr {
    flex: none;
    border: 3px solid transparent;
    border-top-color: #444;
    border-bottom: none;
}

.arr-lg {
    border-width: 4px;
    border-bottom: none;
}

/* title bar */
.top {
    position: relative;
}

.titlebar {
    display: flex;
    height: 25px;
    padding-left: 41px;
    border-bottom: 2px solid #333;
    background:
        radial-gradient(ellipse 30px 8px at 455px 18px, #b4d8f4, transparent),
        radial-gradient(ellipse 55px 8px at 630px 18px, #b4d8f4, transparent),
        radial-gradient(ellipse 40px 8px at 705px 18px, #a8cdf0, transparent),
        radial-gradient(ellipse 40px 8px at 840px 18px, #cfdcf8, transparent),
        radial-gradient(ellipse 40px 8px at 900px 18px, #bccdf4, transparent),
        radial-gradient(ellipse 8px 8px at 1738px 17px, #c4dcfa, transparent),
        radial-gradient(ellipse 12px 8px at 1777px 17px, #b4d0f8, transparent),
        linear-gradient(90deg, #d8fbfa 22%, #e2fffe 40%, #fff 43%, #fff 50%, #e4fefe 58%, #e0fbfb 66%, #e4fefe 75%);
}

.quick-access {
    display: flex;
    align-items: center;
    gap: 8px;
    height: 23px;
    padding-left: 9px;
    background: linear-gradient(#f4f4f4, #cfcfcf);
    border-top: 1px solid #777;
}

.quick-access > .arr {
    margin: 0 -2px;
}

.workspace {
    display: flex;
    align-items: center;
    width: 180px;
    height: 22px;
    padding: 0 2px 0 4px;
    background: #d2d2d2;
    border: 1px solid #777;
}

.workspace select {
    flex: 1;
    margin-left: 1px;
    color: #111;
}

.qa-more {
    display: grid;
    place-items: center;
    align-self: stretch;
    width: 16px;
    margin-left: -8px;
    border-right: 1px solid #777;
}

.qa-more .arr {
    position: relative;
}

.qa-more .arr::before {
    content: "";
    position: absolute;
    left: -4px;
    top: -7px;
    width: 8px;
    height: 1px;
    background: #444;
}

.window-title {
    flex: 1;
    display: flex;
    justify-content: center;
    gap: 17px;
    padding-top: 3px;
    padding-right: 22px;
    font-size: 12px;
    line-height: 18px;
    font-weight: 400;
    color: #111;
}

.window-buttons {
    display: flex;
    width: 103px;
    height: 18px;
    margin-right: 3px;
    border: 1px solid #93a4a8;
    border-top: none;
    border-radius: 0 0 4px 4px;
}

.window-buttons button {
    flex: 28;
    display: grid;
    place-items: center;
    border-right: 1px solid #93a4a8;
}

.window-buttons .win-close {
    flex: 47;
    border: none;
}

.window-buttons svg {
    width: 14px;
    height: 14px;
}

.app-button {
    position: absolute;
    left: 0;
    top: 0;
    display: flex;
    align-items: center;
    width: 41px;
    height: 41px;
    padding-left: 4px;
    gap: 3px;
    background: linear-gradient(#8c8c8c, #c6c6c6);
    border: 1px solid #111;
}

.app-button svg {
    width: 24px;
    height: 26px;
}

.menubar {
    display: flex;
    align-items: center;
    gap: 25px;
    height: 20px;
    padding: 0 4px 0 55px;
    color: #fff;
    background: linear-gradient(#9c9c9c, #575757);
}

.mdi {
    width: 44px;
    height: 12px;
    margin-left: auto;
}

/* ribbon */
.ribbon-tabs {
    display: flex;
    align-items: flex-end;
    height: 20px;
    padding-left: 3px;
    color: #222;
    background: #a0a0a0;
}

.ribbon-tabs a {
    height: 17px;
    padding: 0 10px;
    line-height: 18px;
}

.ribbon-tabs .active {
    background: linear-gradient(#d9d9d9, #fff);
    border-radius: 2px 2px 0 0;
}

.ribbon-min {
    display: flex;
    align-items: center;
    gap: 4px;
    height: 18px;
    margin-left: 20px;
}

.ribbon-min svg {
    height: 10px;
}

.ribbon {
    display: flex;
    height: 100px;
    border-top: 1px solid #fff;
    border-bottom: 2px solid #f4f4f4;
    background: linear-gradient(#e8e8e8, #a2a2a2);
}

.panel {
    display: flex;
    flex-direction: column;
    flex: none;
    background: #fff;
    border-right: 1px solid #b5b5b5;
}

.panel-body {
    display: flex;
    flex: 1;
    padding-top: 5px;
}

.panel footer {
    position: relative;
    display: flex;
    align-items: center;
    justify-content: center;
    gap: 6px;
    height: 18px;
    margin: 0 1px;
    line-height: 18px;
    background: #ececec;
    border-top: 1px solid #d4d4d4;
    border-bottom: 1px solid #c8c8c8;
}

.launch {
    position: absolute;
    right: 3px;
    width: 8px;
    height: 8px;
}

.big {
    display: flex;
    flex-direction: column;
    align-items: center;
    width: 40px;
    padding-top: 2px;
    line-height: 17px;
    white-space: nowrap;
}

.big svg {
    width: 32px;
    height: 32px;
    margin-bottom: 4px;
}

.big .arr {
    margin-top: 4px;
}

.letter {
    height: 36px;
    color: #3d434b;
    font: 500 38px/34px Inter, sans-serif;
}

.stack {
    display: flex;
    flex: none;
    flex-direction: column;
    gap: 2px;
}

.sm {
    display: flex;
    align-items: center;
    gap: 5px;
    height: 22px;
    line-height: 18px;
    white-space: nowrap;
}

.p-draw { width: 212px; padding-left: 3px; }
.p-modify { width: 227px; }
.p-annotate { width: 156px; }
.p-layers { width: 253px; }
.p-block { width: 133px; }
.p-props { width: 245px; }
.p-group { width: 67px; }
.p-utils { width: 76px; }
.p-clip { width: 76px; }
.p-view { width: 60px; border-right: none; }

.p-draw .big:nth-child(4) { width: 44px; }
.p-draw .stack { margin-left: 6px; }
.p-modify .panel-body { padding-left: 7px; }
.p-modify .stack { width: 59px; }
.p-modify .stack:nth-child(3) { width: 75px; }
.p-modify .stack:nth-child(4) { width: 16px; }
.p-annotate .panel-body { padding-left: 5px; gap: 2px; }
.p-annotate .stack { margin-left: 2px; }
.p-annotate .arr,
.p-block .stack .arr { margin-left: 3px; }
.p-annotate .big .arr { margin-left: 0; }
.p-modify .arr { margin-left: 6px; }
.p-layers .panel-body,
.p-props .panel-body { padding-left: 1px; }
.p-block .stack { margin-left: 5px; }
.p-props .big { margin-right: 2px; }
.p-utils .panel-body,
.p-clip .panel-body { padding-left: 5px; }
.p-utils .stack,
.p-clip .stack { margin-left: 8px; }
.p-view .big { margin-left: 10px; }
.p-view footer { padding-right: 12px; }

.combo {
    display: flex;
    align-items: center;
    height: 22px;
    padding-right: 2px;
    background: linear-gradient(#fff, #ececec);
    border: 1px solid #c4c4c4;
}

.combo select {
    flex: 1;
    min-width: 0;
    line-height: 18px;
}

.swatch {
    width: 14px;
    height: 14px;
    background: #000;
}

.layer-combo {
    width: 208px;
    gap: 3px;
    padding-left: 3px;
}

.layer-combo svg {
    margin-right: 1px;
}

.layer-combo select {
    margin-left: 1px;
}

.icon-row {
    display: flex;
    gap: 8px;
    padding-left: 4px;
}

.prop {
    display: flex;
    align-items: center;
    gap: 2px;
}

.prop .combo {
    width: 180px;
}

.color-combo {
    gap: 12px;
    padding-left: 12px;
    color: #000;
}

.line-combo {
    gap: 2px;
    padding-left: 8px;
}

.sample {
    width: 60px;
    height: 1px;
    background: #000;
}

.boxed {
    width: 24px;
    justify-content: center;
}

.boxed.on {
    background: #b3d3f3;
    border: 1px solid #2267b8;
}

/* drawing tabs */
.file-tabs {
    display: flex;
    align-items: flex-end;
    height: 29px;
    padding-left: 18px;
    background: #b1b1b1;
    border-bottom: 4px solid #efefef;
}

.file-tab {
    position: relative;
    display: flex;
    align-items: center;
    justify-content: space-between;
    width: 132px;
    height: 22px;
    padding: 1px 18px 0 14px;
    color: #111;
}

.tab-shape {
    position: absolute;
    left: 0;
    top: 0;
    width: 132px;
    height: 22px;
}

.file-tab span,
.tab-close {
    position: relative;
}

.tab-close {
    width: 8px;
    height: 8px;
}

.file-add {
    padding-bottom: 2px;
}

.file-add svg {
    width: 24px;
}

/* drawing area */
.viewport {
    position: relative;
    flex: 1;
    min-height: 0;
    background: #fff;
    border-bottom: 1px solid #888;
}

.canvas {
    position: absolute;
    inset: 0;
    width: 100%;
    height: 100%;
}

.view-label {
    position: absolute;
    left: 3px;
    top: 6px;
    color: #111;
}

.ucs {
    position: absolute;
    left: 0;
    bottom: 0;
    width: 96px;
    height: 90px;
    overflow: visible;
}

.ucs text {
    font: 300 18px "Open Sans", sans-serif;
}

.viewcube {
    position: absolute;
    right: 30px;
    top: 14px;
    display: flex;
    flex-direction: column;
    align-items: center;
    width: 122px;
    color: #b0b0b0;
    font: 700 18px/26px "Noto Sans CJK SC", sans-serif;
}

.viewcube::before {
    content: "";
    position: absolute;
    top: 7px;
    left: 0;
    width: 122px;
    height: 122px;
    border: 13px solid rgba(240, 240, 240, .4);
    border-radius: 50%;
    margin-top: 14px;
    margin-top: 0;
}

.cube-row {
    position: relative;
    display: flex;
    align-items: center;
    gap: 22px;
    margin: 15px 0 18px;
}

.cube-face {
    width: 52px;
    height: 52px;
    color: #8e949c;
    font-size: 26px;
    font-weight: 400;
    background: rgba(225, 227, 230, .75);
    border: 1px solid #999;
}

.wcs {
    display: flex;
    align-items: center;
    gap: 6px;
    height: 16px;
    margin-top: 18px;
    padding: 0 4px;
    color: #a5a5ad;
    font: 11px/16px "Liberation Sans", sans-serif;
    background: rgba(228, 228, 244, .8);
    border-radius: 3px;
}

.wcs svg {
    width: 8px;
    height: 5px;
}

.navbar {
    position: absolute;
    right: 9px;
    top: 211px;
    width: 36px;
    height: 214px;
}

.edge {
    position: absolute;
    right: 0;
    top: 0;
    bottom: 0;
    width: 8px;
    background: #b9d1ea;
    border-right: 1px solid #000;
    box-shadow: inset -1px 0 #27c4e8;
}

.meter {
    position: absolute;
    right: 2px;
    top: 52px;
    width: 8px;
    height: 58px;
    background: repeating-linear-gradient(#3fce5c 0 1px, #2b7a45 1px 3px) 1px 26px / 6px 28px no-repeat #4a5560;
    border-radius: 4px;
}

/* command line */
.command {
    position: absolute;
    left: 497px;
    bottom: 0;
    width: 927px;
}

.history {
    margin-left: 53px;
    padding: 13px 0 2px 2px;
    background: #c8c8c8;
    border: 1px solid #000;
    color: #111;
    font: 13px/15px "Noto Sans CJK SC", sans-serif;
}

.history p {
    height: 15px;
    white-space: pre;
}

.history kbd {
    font: 12px/15px "DejaVu Sans Mono", monospace;
}

.prompt {
    display: flex;
    align-items: center;
    height: 26px;
    background: #fff;
}

.grip {
    width: 53px;
    height: 26px;
    background: linear-gradient(#777, #444);
    border-radius: 3px 0 0 3px;
}

.grip svg {
    width: 52px;
    height: 26px;
}

.prompt-icon {
    margin: 0 3px 0 5px;
}

.prompt .arr {
    border-top-color: #999;
}

.caret {
    width: 1px;
    height: 15px;
    margin-left: 5px;
    background: #000;
}

.prompt input {
    flex: 1;
}

.history-toggle {
    display: grid;
    place-items: center;
    width: 16px;
    height: 26px;
    background: #b3d3f3;
    border: 1px solid #2267b8;
}

.history-toggle svg {
    width: 8px;
    height: 4px;
}

.watermark {
    position: absolute;
    right: 5px;
    bottom: -11px;
    z-index: 2;
    color: #7d7d7d;
    font: 900 36px/44px "Noto Sans CJK SC", sans-serif;
    pointer-events: none;
}

/* status bar */
.statusbar {
    display: flex;
    justify-content: space-between;
    height: 30px;
    background: #b1b1b1;
    border-bottom: 2px solid #222;
}

.layout-tabs {
    display: flex;
    gap: 2px;
    padding-left: 12px;
}

.layout-tabs button {
    height: 18px;
    padding: 0 10px;
    color: #666;
    line-height: 18px;
    background: #d8d8d8;
    border-radius: 2px 2px 10px 10px;
}

.layout-tabs .active {
    padding: 0 11px;
    color: #000;
    font-weight: 700;
    background: #fafafa;
}

.layout-tabs .layout-add {
    margin-left: 3px;
    padding: 0 5px;
    background: #ececec;
    border-radius: 10px 0 10px 2px;
}

.layout-add svg {
    width: 12px;
    height: 12px;
}

.status-tools {
    display: flex;
    align-items: center;
    padding-right: 1px;
    color: #111;
    background: #e5e5e5;
}

.status-tools > button {
    display: grid;
    place-items: center;
    width: 24px;
    height: 24px;
}

.status-tools > .wide {
    width: 28px;
}

.status-tools > .text {
    width: auto;
    font-weight: 500;
}

.coords {
    padding: 0 8px 0 16px;
    font-family: "Noto Sans", sans-serif;
    font-weight: 500;
}

.status-tools > .model {
    padding: 0 3px 0 4px;
}

.status-tools > .scale {
    display: flex;
    align-items: center;
    width: 40px;
    padding-left: 6px;
}

.status-tools > .units {
    width: 56px;
    padding-left: 5px;
    justify-content: start;
}

.drop {
    display: grid;
    place-items: center;
    width: 16px;
}

.drop::before {
    content: "";
    border: 4px solid transparent;
    border-top-color: #111;
    border-bottom: none;
}

.dim {
    opacity: .5;
}
```
FILE: grid.js
```js
// Drawing grid: every fifth line is a major one
const MAJOR = 97.28;
const ORIGIN = { x: 83.1, y: 15.4 };
const grid = document.getElementById('grid');

function drawGrid() {
    const width = window.innerWidth;
    const height = window.innerHeight;
    const step = MAJOR / 5;
    const shapes = [];

    const line = (pos, major, vertical) => {
        const halo = major ? 0.14 : 0.08;
        const core = major ? 0.52 : 0.36;
        const rect = (at, size, alpha) => vertical
            ? `<rect x="${at}" y="0" width="${size}" height="${height}" fill-opacity="${alpha}"/>`
            : `<rect x="0" y="${at}" width="${width}" height="${size}" fill-opacity="${alpha}"/>`;
        shapes.push(rect(pos - 1, 3, halo), rect(pos, 1, core));
    };

    for (let i = -5; ORIGIN.x + i * step < width; i++) {
        line(Math.round(ORIGIN.x + i * step), i % 5 === 0, true);
    }
    for (let i = -1; ORIGIN.y + i * step < height; i++) {
        line(Math.round(ORIGIN.y + i * step), i % 5 === 0, false);
    }
    grid.innerHTML = shapes.join('');
}

drawGrid();
window.addEventListener('resize', drawGrid);
```
